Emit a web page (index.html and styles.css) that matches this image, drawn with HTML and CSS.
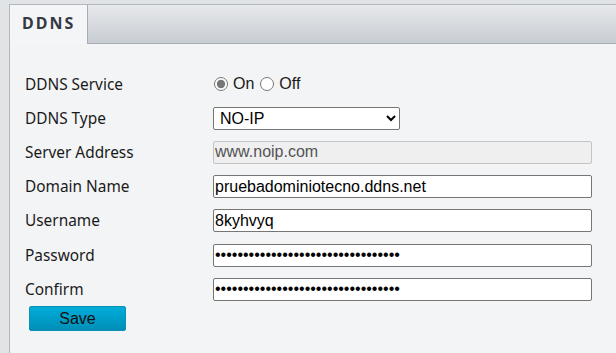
FILE: index.html
```html
<!DOCTYPE html>
<html lang="en">

<head>
  <meta charset="UTF-8" />
  <title>DDNS</title>
  <link rel="stylesheet" href="styles.css">
</head>

<body>
  <div class="page">
    <div class="tabs">
      <div class="tab active">DDNS</div>
      <div class="tab-fill"></div>
    </div>

    <form class="ddns-form">
      <div class="row">
        <label class="label">DDNS Service</label>
        <div class="radios">
          <label class="radio"><input type="radio" name="svc" checked /> On</label>
          <label class="radio"><input type="radio" name="svc" /> Off</label>
        </div>
      </div>
      <div class="row">
        <label class="label">DDNS Type</label>
        <select class="field select">
          <option>NO-IP</option>
        </select>
      </div>
      <div class="row">
        <label class="label">Server Address</label>
        <input class="field" type="text" value="www.noip.com" disabled />
      </div>
      <div class="row">
        <label class="label">Domain Name</label>
        <input class="field" type="text" value="pruebadominiotecno.ddns.net" />
      </div>
      <div class="row">
        <label class="label">Username</label>
        <input class="field" type="text" value="8kyhvyq" />
      </div>
      <div class="row">
        <label class="label">Password</label>
        <input class="field" type="password" value="xxxxxxxxxxxxxxxxxxxxxxxxxxxxxxxxx" />
      </div>
      <div class="row">
        <label class="label">Confirm</label>
        <input class="field" type="password" value="xxxxxxxxxxxxxxxxxxxxxxxxxxxxxxxxx" />
      </div>
      <button type="button" class="save">Save</button>
    </form>
  </div>
</body>

</html>
```

FILE: styles.css
```css
* {
  box-sizing: border-box;
  margin: 0;
  padding: 0;
}

body {
  background: #e1e4e7;
  font-family: 'Noto Sans', sans-serif;
  color: #1a1a1a;
  padding: 4px 0 0 9px;
  height: 353px;
  overflow: hidden;
}

.page {
  background: #f3f4f6;
  border-left: 1px solid #b4b7bc;
  border-top: 1px solid #b4b7bc;
  height: 100%;
}

.tabs {
  display: flex;
  height: 39px;
}

.tab {
  width: 77px;
  background: #f4f5f7;
  font-weight: 700;
  font-size: 16px;
  letter-spacing: 2px;
  color: #333a44;
  padding: 7px 0 0 12px;
}

.tab-fill {
  flex: 1;
  background: linear-gradient(#e7e9eb, #c8cdd3);
  border-left: 1px solid #a9adb3;
  border-bottom: 1px solid #a9adb3;
}

.ddns-form {
  padding: 23px 0 0 15px;
}

.row {
  display: flex;
  align-items: center;
  height: 34.2px;
}

.label {
  width: 188px;
  font-size: 15.4px;
  color: #1a1a1a;
}

.radios {
  display: flex;
  gap: 5px;
  font-family: 'Liberation Sans', sans-serif;
  font-size: 16px;
}

.radio {
  display: flex;
  align-items: center;
  gap: 3px;
}

.radio input {
  width: 14px;
  height: 14px;
  margin: 0 2px 0 1px;
  accent-color: #767676;
}

.field {
  width: 379px;
  height: 23px;
  border: 1px solid #767676;
  border-radius: 2px;
  background: #fff;
  font-family: 'Liberation Sans', sans-serif;
  font-size: 16px;
  color: #000;
  padding: 0 1px;
}

.field:disabled {
  background: #efefef;
  border-color: #c4c4c4;
  color: #545454;
}

.select {
  width: 187px;
  padding: 0 0 0 2px;
}

.save {
  margin: 0 0 0 4px;
  width: 97px;
  height: 25px;
  border: 1px solid #0a8fb5;
  border-radius: 2px;
  background: linear-gradient(#00acd9, #008fb8);
  font-family: 'Liberation Sans', sans-serif;
  font-size: 16px;
  color: #111;
}
```
